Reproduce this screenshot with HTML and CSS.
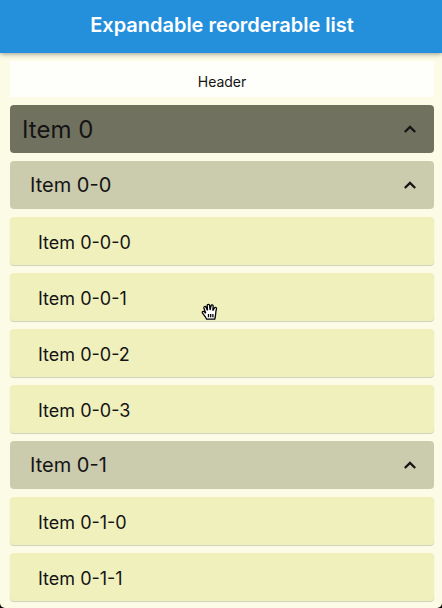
FILE: index.html
```html
<!DOCTYPE html>
<html lang="en">
<head>
<meta charset="utf-8">
<title>Expandable reorderable list</title>
<link rel="stylesheet" href="styles.css">
</head>
<body>
<div class="screen">
  <header class="app-bar"><h1>Expandable reorderable list</h1></header>
  <main class="list">
    <div class="list-header">Header</div>
    <div class="row group root"><span>Item 0</span><svg class="chevron" viewBox="0 0 14 9"><path d="M1.8 7 7 1.9 12.2 7"/></svg></div>
    <div class="row group"><span>Item 0-0</span><svg class="chevron" viewBox="0 0 14 9"><path d="M1.8 7 7 1.9 12.2 7"/></svg></div>
    <div class="row leaf"><span>Item 0-0-0</span></div>
    <div class="row leaf"><span>Item 0-0-1</span></div>
    <div class="row leaf"><span>Item 0-0-2</span></div>
    <div class="row leaf"><span>Item 0-0-3</span></div>
    <div class="row group"><span>Item 0-1</span><svg class="chevron" viewBox="0 0 14 9"><path d="M1.8 7 7 1.9 12.2 7"/></svg></div>
    <div class="row leaf"><span>Item 0-1-0</span></div>
    <div class="row leaf"><span>Item 0-1-1</span></div>
  </main>
  <svg class="cursor" viewBox="0 0 18 18"><path d="M5.6 16.2C5 14 3 12.3 1.4 9.8C.8 8.6 2.4 7.8 3.4 8.9L4.7 10.2 2.9 5C2.5 3.4 4.5 2.8 5.1 4.4L6.5 7.4 6.2 2.6C6.1 1 8.4.8 8.6 2.4L9.1 7 10 2.8C10.4 1.3 12.4 1.7 12.2 3.2L11.8 7.6 13.4 5C14.3 3.7 16 4.6 15.4 6.2C14.3 9 15.2 12 13.7 16.2Z"/><path d="M7.5 11v3.2M9.7 11v3.2M11.9 11v3.2"/></svg>
</div>
</body>
</html>
```

FILE: styles.css
```css
* { box-sizing: border-box; }
body { margin: 0; background: #000; font-family: Inter, "Liberation Sans", sans-serif; color: #141414; }
.screen { position: relative; height: 608px; overflow: hidden; background: #fcfce6; border-radius: 0 0 5px 5px; }
.app-bar { height: 53px; display: flex; justify-content: center; padding: 12px 0 0 2px; background: #2490dc; box-shadow: 0 1px 5px rgba(0, 0, 0, .4); }
h1 { margin: 0; font-size: 20px; line-height: 26px; font-weight: 600; letter-spacing: -.02px; color: #fff; white-space: nowrap; }
.list { display: flex; flex-direction: column; gap: 8px; padding: 8px 8px 0 10px; }
.list-header { height: 36px; display: flex; align-items: center; justify-content: center; padding-top: 5px; font-size: 14px; letter-spacing: -.05px; background: #fefefa; }
.row { height: 48px; flex: none; display: flex; align-items: center; justify-content: space-between; border-radius: 4px; }
.group { padding: 0 17px 0 20px; font-size: 20px; background: #cbcbae; }
.root { padding-left: 12px; font-size: 24px; background: #717160; }
.leaf { padding-left: 28px; padding-top: 2px; font-size: 18px; background: #f0f0bd; box-shadow: 0 1px 1px rgba(0, 0, 0, .18); }
.chevron { width: 14px; height: 9px; fill: none; stroke: #141414; stroke-width: 2.2; }
.cursor { position: absolute; left: 201px; top: 303px; width: 18px; height: 18px; fill: #fff; stroke: #000; stroke-width: 1.3; }
```
